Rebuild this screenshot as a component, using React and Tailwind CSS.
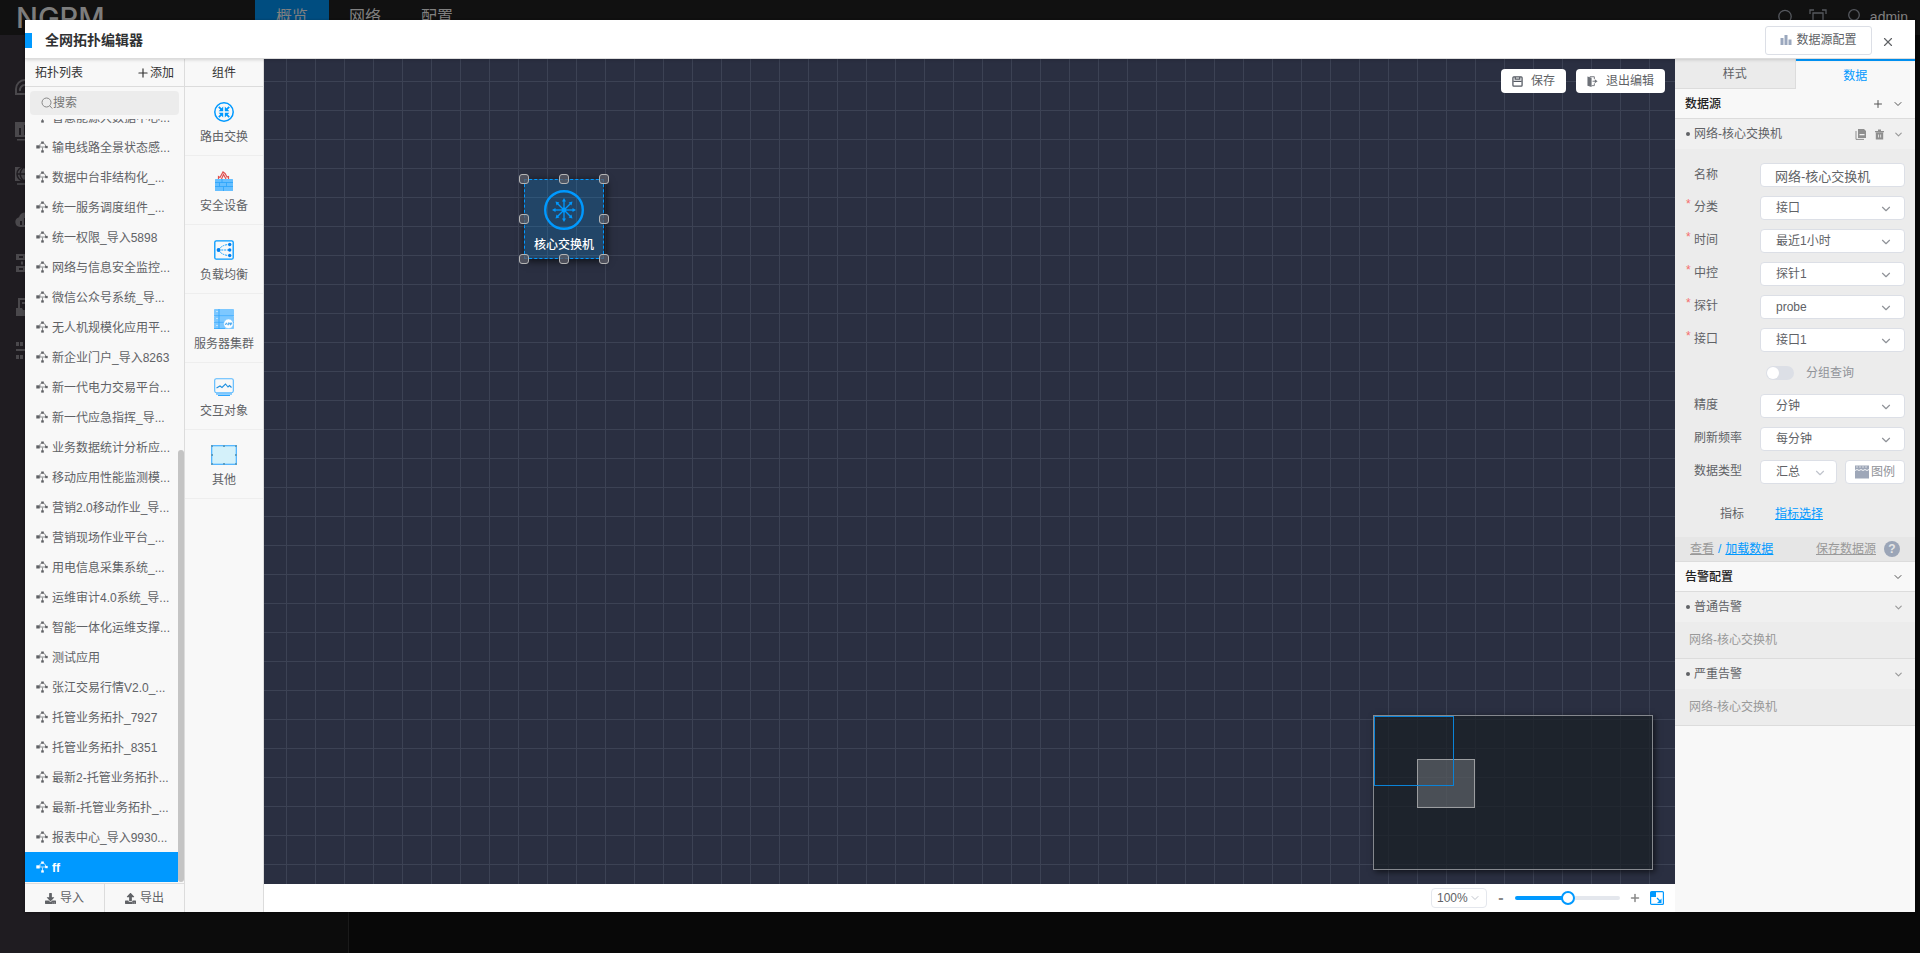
import React from "react";
import { FaDownload, FaUpload } from "react-icons/fa";
import { ChevronDown, Plus, X } from "lucide-react";

const topologies = [
  "智慧能源大数据中心...",
  "输电线路全景状态感...",
  "数据中台非结构化_...",
  "统一服务调度组件_...",
  "统一权限_导入5898",
  "网络与信息安全监控...",
  "微信公众号系统_导...",
  "无人机规模化应用平...",
  "新企业门户_导入8263",
  "新一代电力交易平台...",
  "新一代应急指挥_导...",
  "业务数据统计分析应...",
  "移动应用性能监测模...",
  "营销2.0移动作业_导...",
  "营销现场作业平台_...",
  "用电信息采集系统_...",
  "运维审计4.0系统_导...",
  "智能一体化运维支撑...",
  "测试应用",
  "张江交易行情V2.0_...",
  "托管业务拓扑_7927",
  "托管业务拓扑_8351",
  "最新2-托管业务拓扑...",
  "最新-托管业务拓扑_...",
  "报表中心_导入9930...",
  "ff",
];

function TopologyIcon() {
  return (
    <svg className="size-3 shrink-0" viewBox="0 0 12 12" fill="currentColor" stroke="currentColor">
      <path d="M2 6h8M4 5.500V3.500L5.500 2h2L9.500 4v1.500M6.500 6.500v4" fill="none" strokeWidth="0.700" />
      <rect x="0.300" y="4.300" width="3.400" height="3.200" stroke="none" />
      <rect x="5.200" y="0.500" width="2.600" height="2.200" stroke="none" />
      <rect x="9.200" y="4.900" width="2.500" height="2.300" stroke="none" />
      <rect x="5.200" y="9.300" width="2.600" height="2.300" stroke="none" />
    </svg>
  );
}

function RouterIcon() {
  return (
    <svg className="size-5" viewBox="0 0 20 20" fill="none" stroke="#0099ff">
      <circle cx="10" cy="10" r="9.200" strokeWidth="1.500" />
      {[0, 90, 180, 270].map((angle) => (
        <g key={angle} transform={`rotate(${angle} 10 10)`}>
          <path d="M4.800 4.800l2.500 2.500" strokeWidth="1.800" />
          <path d="M9.200 4.600V9.200H4.600z" fill="#0099ff" stroke="none" />
        </g>
      ))}
    </svg>
  );
}

function FirewallIcon() {
  return (
    <svg className="size-5" viewBox="0 0 20 20">
      <path d="M4.500 8V5.500L6 6.500 9 1l2 1.500L13 6l1.500-.500V8M7.500 8l2-4.500L12 8" fill="none" stroke="#e0504f" strokeWidth="1.200" />
      <rect x="1" y="8" width="18" height="12" rx="0.500" fill="#66bfff" />
      <path d="M1 11.500h18M1 15.500h18M8 8v3.500M12.500 11.500v4M5.500 11.500v4M9.500 15.500V20" stroke="#2aa3fb" strokeWidth="0.800" />
    </svg>
  );
}

function BalanceIcon() {
  return (
    <svg className="size-5" viewBox="0 0 20 20" fill="none" stroke="#0099ff">
      <rect x="0.800" y="0.800" width="18.400" height="18.400" rx="1.500" strokeWidth="1.300" />
      <path d="M4.500 10h11M4.500 10Q8 4.500 15.500 4.500M4.500 10Q8 15.500 15.500 15.500" strokeWidth="0.900" strokeDasharray="2 0.800" />
      <g fill="#0080f0" stroke="none">
        <circle cx="4.500" cy="10" r="1.900" />
        <circle cx="15.700" cy="4.500" r="1.700" />
        <circle cx="15.700" cy="10" r="1.700" />
        <circle cx="15.700" cy="15.500" r="1.700" />
      </g>
    </svg>
  );
}

function ServerIcon() {
  return (
    <svg className="size-5" viewBox="0 0 20 20">
      <g fill="#7dc8ff">
        <rect y="0" width="20" height="6.400" rx="0.800" />
        <rect y="7" width="20" height="6" rx="0.800" />
        <rect y="13.600" width="20" height="6.400" rx="0.800" />
      </g>
      <path d="M0 6.600h20M0 13.400h20M0 19.600h11M5 0v20" stroke="#2ca5ff" strokeWidth="0.800" fill="none" />
      <path d="M2.500 2.500h1M2.500 9.500h1M2.500 16.500h1" stroke="#fff" />
      <circle cx="14.500" cy="14.800" r="4.800" fill="#fff" stroke="#7dc8ff" strokeWidth="0.600" />
      <path d="M11.300 16l1-2.200 1 2.200M14.200 16.400v-2.500h1.200v1.300h-1.200M16.500 16.400v-2.500h1.200v1.300h-1.200" stroke="#1d90e8" strokeWidth="0.700" fill="none" />
    </svg>
  );
}

function InteractIcon() {
  return (
    <svg className="h-[18px] w-5" viewBox="0 1 20 18" fill="none" stroke="#2ca5ff">
      <rect x="0.700" y="1.700" width="18.600" height="14" rx="1.600" strokeWidth="1.100" stroke="#55b8ff" />
      <path d="M2.500 11l3.500-2 2 1.500L11.500 7l2.500 3 1.500-1.500 2 2" strokeWidth="1.100" stroke="#1d8fe0" />
      <path d="M2 17h16M4 18.500h12" strokeWidth="1.200" />
    </svg>
  );
}

function OtherIcon() {
  return (
    <svg className="h-5 w-[26px]" viewBox="0 0 26 20">
      <rect x="0.700" y="0.700" width="24.600" height="18.600" fill="#d4f1fa" stroke="#45b0ff" strokeWidth="1.200" />
      <path d="M0 0h2v2H0zM24 0h2v2h-2zM0 18h2v2H0zM24 18h2v2h-2zM12 0h2v2h-2zM12 18h2v2h-2zM0 9h2v2H0zM24 9h2v2h-2z" fill="#5b9fc4" />
    </svg>
  );
}

const components = [
  { name: "路由交换", Icon: RouterIcon },
  { name: "安全设备", Icon: FirewallIcon },
  { name: "负载均衡", Icon: BalanceIcon },
  { name: "服务器集群", Icon: ServerIcon },
  { name: "交互对象", Icon: InteractIcon },
  { name: "其他", Icon: OtherIcon },
];

function BackgroundPage() {
  return (
    <div className="flex h-full flex-col" aria-hidden="true">
      <header className="flex h-[35px] shrink-0 bg-[#111111] text-base text-[#808080]">
        <div className="w-[255px] overflow-hidden pl-4 font-[Inter] text-[29px] leading-[35px] font-medium text-[#7d7d7d]">NGPM</div>
        <nav className="flex leading-[34px]">
          <a href="#overview" className="w-[74px] bg-[#004d80] text-center">概览</a>
          <a href="#network" className="w-[72px] text-center">网络</a>
          <a href="#config" className="w-[72px] text-center">配置</a>
        </nav>
        <div className="ml-auto flex gap-3 pr-3 text-sm leading-[34px]">
          <svg className="mt-2 size-5" viewBox="0 0 20 20" fill="none" stroke="#55585e" strokeWidth="1.300">
            <circle cx="9" cy="8.500" r="6.200" />
            <path d="M13.500 13.500l4 4" />
          </svg>
          <svg className="mt-2 size-5" viewBox="0 0 20 20" fill="none" stroke="#55585e" strokeWidth="1.300">
            <path d="M2 6V2h4M14 2h4v4M18 14v4h-4M6 18H2v-4M5 5h10v10H5z" />
          </svg>
          <div className="flex gap-1.5 pl-1">
            <svg className="mt-2 size-5" viewBox="0 0 20 20" fill="none" stroke="#55585e" strokeWidth="1.300">
              <circle cx="10" cy="7" r="5.300" />
              <path d="M2 19c0-4 4-6.500 8-6.500s8 2.500 8 6.500" />
            </svg>
            <span>admin</span>
          </div>
        </div>
      </header>
      <div className="flex min-h-0 flex-1">
        <aside className="flex w-[50px] flex-col gap-6 bg-[#1f1c21] pt-[42px] pl-[15px] text-[#4a484c]">
          <svg className="size-5" viewBox="0 0 20 20" fill="none" stroke="currentColor" strokeWidth="2">
            <path d="M1 17v-5a9 9 0 0 1 18 0v5zM5 14a5 5 0 0 1 5-6" />
          </svg>
          <svg className="size-5" viewBox="0 0 20 20" fill="currentColor">
            <path d="M0 1h20v15H0zM4 7v7h2V7zM9 4v10h2V4zM14 9v5h2V9zM2 18h16v1.500H2z" fillRule="evenodd" />
          </svg>
          <svg className="size-5" viewBox="0 0 20 20" fill="none" stroke="currentColor" strokeWidth="1.500">
            <path d="M0 2h20v14H0z" fill="currentColor" stroke="none" />
            <circle cx="9" cy="9" r="7" stroke="#1f1c21" />
            <path d="M2 9h14M9 2c-5 4-5 10 0 14M9 2c5 4 5 10 0 14" stroke="#1f1c21" />
            <path d="M2 19h16" />
          </svg>
          <svg className="size-5" viewBox="0 0 20 20" fill="currentColor">
            <path d="M5 18a5 5 0 0 1-1-9.800A6.500 6.500 0 0 1 16.500 8 5 5 0 0 1 15 18zM5 12v4h2v-4zM9 9v7h2V9z" fillRule="evenodd" />
          </svg>
          <svg className="size-5" viewBox="0 0 20 20" fill="currentColor">
            <path d="M1 1h18v6H1zM1 13h18v6H1zM6 8.500h2v3H6zM4 3v2h4V3zM4 15v2h4v-2z" fillRule="evenodd" />
          </svg>
          <svg className="size-5" viewBox="0 0 20 20" fill="currentColor">
            <path d="M3 1h14v10h2v8H1v-8h2zM5 3v8h2l1 2h4l1-2h2V3zM7 5h6v2H7z" fillRule="evenodd" />
          </svg>
          <svg className="size-5" viewBox="0 0 20 20" fill="currentColor">
            <path d="M1 1h3v4H1zM5 1h3v4H5zM1 8h18v2H1zM1 14h3v4H1zM5 14h3v4H5z" />
          </svg>
        </aside>
        <div className="w-[299px] border-r border-[#1a1a1a] bg-[#0c0c0c]" />
        <div className="flex-1 bg-[#080808]" />
      </div>
    </div>
  );
}

function TopologySidebar() {
  return (
    <aside className="flex w-40 shrink-0 flex-col border-r border-[#dcdcdc] bg-[#f8f8f8]">
      <div className="flex h-7 shrink-0 items-center justify-between border-b border-[#dcdcdc] pr-2.5 pl-2.5 text-[#333]">
        <h2>拓扑列表</h2>
        <button className="flex items-center">
          <Plus className="size-3.5" strokeWidth={2} />
          添加
        </button>
      </div>
      <div className="px-[5px] py-1">
        <label className="flex h-6 items-center rounded bg-[#ececec] pl-[11px] text-[#888]">
          <svg className="size-3 shrink-0" viewBox="0 0 12 12" fill="none" stroke="currentColor">
            <circle cx="5.500" cy="5.500" r="4.500" />
            <path d="M8.700 8.700l2.500 2.800" />
          </svg>
          <input type="text" aria-label="搜索" placeholder="搜索" className="w-full min-w-0 bg-transparent outline-none placeholder:text-[#757575]" />
        </label>
      </div>
      <div className="relative mb-px flex min-h-0 flex-1 flex-col justify-end overflow-hidden pr-1.5">
        <ul>
          {topologies.map((name) => (
            <li key={name}>
              <button
                className={
                  name === "ff"
                    ? "flex h-[30px] w-full items-center gap-1 bg-[#0099ff] pl-[11px] font-bold whitespace-nowrap text-white"
                    : "flex h-[30px] w-full items-center gap-1 pl-[11px] whitespace-nowrap text-[#606266]"
                }
              >
                <TopologyIcon />
                <span className="pt-0.5">{name}</span>
              </button>
            </li>
          ))}
        </ul>
        <div className="absolute right-0 bottom-0 h-[432px] w-1.5 rounded-full bg-[#c4c4c4]" />
      </div>
      <div className="flex h-[29px] shrink-0 border-t border-[#dcdcdc] text-[#606266]">
        <button className="flex flex-1 items-center justify-center gap-1 border-r border-[#dcdcdc]">
          <FaDownload className="size-[11px]" />
          导入
        </button>
        <button className="flex flex-1 items-center justify-center gap-1">
          <FaUpload className="size-[11px]" />
          导出
        </button>
      </div>
    </aside>
  );
}

function ComponentPalette() {
  return (
    <aside className="w-[79px] shrink-0 border-r border-[#dcdcdc] bg-[#f8f8f8]">
      <h2 className="flex h-7 items-center justify-center border-b border-[#dcdcdc] text-[#333]">组件</h2>
      <ul>
        {components.map(({ name, Icon }) => (
          <li key={name} className="flex flex-col items-center gap-1.5 border-b border-[#eeeeee] pt-[15px] pb-[9px] text-[#606266]">
            <Icon />
            <span className="leading-[18px]">{name}</span>
          </li>
        ))}
      </ul>
    </aside>
  );
}

const handles = [
  "-top-[6px] -left-[6px]",
  "-top-[6px] left-[34px]",
  "-top-[6px] left-[74px]",
  "top-[34px] -left-[6px]",
  "top-[34px] left-[74px]",
  "top-[74px] -left-[6px]",
  "top-[74px] left-[34px]",
  "top-[74px] left-[74px]",
];

function CanvasNode() {
  return (
    <div className="absolute top-[120px] left-[260px] flex size-20 flex-col items-center border border-dashed border-[#0099ff] bg-[#0099ff]/20 pt-2.5 shadow-[2px_2px_8px_rgba(0,0,0,0.7)]">
      <svg className="size-10" viewBox="0 0 40 40" fill="none" stroke="#0099ff">
        <circle cx="20" cy="20" r="18.800" strokeWidth="2.400" />
        {[0, 45, 90, 135, 180, 225, 270, 315].map((angle) => (
          <g key={angle} transform={`rotate(${angle} 20 20)`}>
            <path d="M20 20V10" strokeWidth="1.300" />
            <path d="M18 11.500L20 8l2 3.500z" fill="#0099ff" stroke="none" />
          </g>
        ))}
        <circle cx="20" cy="20" r="2.400" fill="#0099ff" stroke="none" />
      </svg>
      <span className="mt-1.5 leading-[18px] font-medium text-white">核心交换机</span>
      {handles.map((place) => (
        <span key={place} className={`absolute size-2.5 rounded-[3px] border border-[#b5b5b5] bg-[#5a5b66]/80 ${place}`} />
      ))}
    </div>
  );
}

function Minimap() {
  return (
    <div className="absolute right-[22px] bottom-3.5 h-[155px] w-[280px] border border-[#85888e] bg-[#1a2026]/75 shadow-[2px_2px_6px_rgba(0,0,0,0.6)]">
      <div className="absolute top-[43px] left-[43px] h-[49px] w-[58px] border border-[#9b9da0] bg-white/20" />
      <div className="absolute top-0 left-0 h-[70px] w-20 border border-[#0a83d8]" />
    </div>
  );
}

function Canvas() {
  return (
    <main className="flex min-w-0 flex-1 flex-col">
      <div className="relative min-h-0 flex-1 overflow-hidden bg-[#2a2f41] bg-[linear-gradient(to_right,#3c4254_1px,transparent_1px),linear-gradient(to_bottom,#3c4254_1px,transparent_1px)] bg-size-[29px_29px] bg-position-[22px_22px]">
        <div className="flex justify-end gap-2.5 pt-2.5 pr-2.5 text-[#606266]">
          <button className="flex h-6 items-center gap-2 rounded-sm bg-white px-[11px]">
            <svg className="size-[11px]" viewBox="0 0 12 12" fill="none" stroke="#555a63" strokeWidth="1.400">
              <rect x="1" y="1" width="10" height="10" rx="1" />
              <path d="M1.500 5.800h9M3.500 1v2.500h5V1" />
            </svg>
            保存
          </button>
          <button className="flex h-6 items-center gap-2 rounded-sm bg-white px-[11px]">
            <svg className="size-[11px]" viewBox="0 0 12 12" fill="#6d7178">
              <path d="M0.500 0.500L5 1.800V12L0.500 10.500z" />
              <path d="M3 0.800h5v2.500M8 8v2.500H5M6 5.700h3" fill="none" stroke="#6d7178" />
              <path d="M8.500 3.500l3 2.200-3 2.200z" />
            </svg>
            退出编辑
          </button>
        </div>
        <CanvasNode />
        <Minimap />
      </div>
      <footer className="flex h-7 shrink-0 items-center justify-end bg-white pr-[11px] text-[#606266]">
        <div className="relative">
          <select aria-label="缩放比例" className="h-5 w-14 appearance-none rounded-sm border border-[#e4e7ed] bg-white pl-[5px]">
            <option>100%</option>
          </select>
          <ChevronDown className="pointer-events-none absolute top-1 right-1.5 size-3 text-[#c0c4cc]" strokeWidth={2} />
        </div>
        <button aria-label="缩小" className="w-7 text-center text-base leading-5 font-bold text-[#888]">-</button>
        <input
          type="range"
          aria-label="缩放"
          defaultValue="50"
          className="h-1 w-[105px] appearance-none rounded-full bg-[linear-gradient(to_right,#0099ff_50%,#e4e7ed_50%)] [&::-webkit-slider-thumb]:size-3.5 [&::-webkit-slider-thumb]:appearance-none [&::-webkit-slider-thumb]:rounded-full [&::-webkit-slider-thumb]:border-2 [&::-webkit-slider-thumb]:border-[#0099ff] [&::-webkit-slider-thumb]:bg-white"
        />
        <button aria-label="放大" className="flex w-[30px] justify-center text-[#888]">
          <Plus className="size-3" strokeWidth={3} />
        </button>
        <button aria-label="适应画布">
          <svg className="size-3.5" viewBox="0 0 14 14">
            <rect x="0.600" y="0.600" width="12.800" height="12.800" rx="1" fill="#fff" stroke="#0099ff" strokeWidth="1.200" />
            <path d="M1 1h5v5H1zM11.500 7.500v4.500H7z" fill="#0099ff" />
            <path d="M7 7l3 3" stroke="#0099ff" strokeWidth="1.300" />
          </svg>
        </button>
      </footer>
    </main>
  );
}

function SelectRow({ id, label, value, required }) {
  return (
    <div className="flex h-6 items-center">
      <span className="w-2 shrink-0 self-start text-[#f56c6c]">{required ? "*" : ""}</span>
      <label htmlFor={id} className="w-[66px] shrink-0 pb-0.5">{label}</label>
      <div className="relative flex-1">
        <select id={id} className="block h-6 w-full appearance-none rounded-sm border border-[#dcdfe6] bg-white pl-[15px]">
          <option>{value}</option>
        </select>
        <ChevronDown className="pointer-events-none absolute top-1.5 right-3 size-3.5 text-[#909399]" strokeWidth={2} />
      </div>
    </div>
  );
}

function SectionHeader({ title, children }) {
  return (
    <div className="flex h-[30px] items-center justify-between border-b border-[#dcdcdc] bg-[#f8f8f8] pr-[11px] pl-2.5 text-[#222]">
      <h3 className="font-medium">{title}</h3>
      <div className="flex items-center gap-2 text-[#555]">
        {children}
        <ChevronDown className="size-3" strokeWidth={2} />
      </div>
    </div>
  );
}

function ItemHeader({ title, children }) {
  return (
    <div className="flex h-[30px] items-center bg-[#f0f0f0] pr-[11px] pl-[11px] text-[#606266]">
      <span className="mr-1 size-1 rounded-full bg-[#606266]" />
      <h4>{title}</h4>
      <div className="ml-auto flex items-center gap-2 text-[#999]">
        {children}
        <ChevronDown className="size-[11px]" strokeWidth={2.5} />
      </div>
    </div>
  );
}

function DataPanel() {
  return (
    <aside className="w-60 shrink-0 bg-[#f8f8f8] text-[#606266]">
      <div className="flex h-[30px]" role="tablist">
        <button role="tab" aria-selected="false" className="flex-1 border-r border-b border-[#dcdcdc] bg-[#ebebeb]">样式</button>
        <button role="tab" aria-selected="true" className="flex-1 border-t-2 border-[#0099ff] pt-0.5 text-[#0099ff]">数据</button>
      </div>
      <SectionHeader title="数据源">
        <button aria-label="添加数据源">
          <Plus className="size-3" strokeWidth={2} />
        </button>
      </SectionHeader>
      <ItemHeader title="网络-核心交换机">
        <button aria-label="复制">
          <svg className="size-[11px]" viewBox="0 0 11 11" fill="#8f8f8f">
            <path d="M3 0h6l2 2v7H3zM4.500 5h5v1.200h-5z" fillRule="evenodd" />
            <path d="M1 2v8.400h8" fill="none" stroke="#8f8f8f" />
          </svg>
        </button>
        <button aria-label="删除">
          <svg className="size-[11px]" viewBox="0 0 11 11" fill="#8f8f8f">
            <path d="M1 2h9v1.200H1zM4 0.500h3V2H4zM1.800 3.600h7.400V10.500H1.800zM4 5.500v3h0.800v-3zM6.300 5.500v3h0.800v-3z" fillRule="evenodd" />
          </svg>
        </button>
      </ItemHeader>
      <form className="flex flex-col gap-[9px] bg-[#ececec] pt-3.5 pr-2.5 pb-3.5 pl-[11px]">
        <div className="flex h-6 items-center">
          <label htmlFor="name" className="w-[74px] shrink-0 pl-2">名称</label>
          <input id="name" type="text" defaultValue="网络-核心交换机" className="h-6 min-w-0 flex-1 rounded-sm border border-[#dcdfe6] bg-white pl-3.5 text-[13px]" />
        </div>
        <SelectRow id="category" label="分类" value="接口" required />
        <SelectRow id="time" label="时间" value="最近1小时" required />
        <SelectRow id="control" label="中控" value="探针1" required />
        <SelectRow id="probe" label="探针" value="probe" required />
        <SelectRow id="port" label="接口" value="接口1" required />
        <label className="flex h-6 items-center gap-3 pl-20 text-[#909399]">
          <input type="checkbox" role="switch" className="flex h-3.5 w-7 appearance-none items-center rounded-full bg-[#dcdfe6] pl-px before:size-3 before:rounded-full before:bg-white" />
          分组查询
        </label>
        <SelectRow id="precision" label="精度" value="分钟" />
        <SelectRow id="refresh" label="刷新频率" value="每分钟" />
        <div className="flex h-6 items-center">
          <label htmlFor="kind" className="w-[74px] shrink-0 pb-0.5 pl-2">数据类型</label>
          <div className="relative flex-1">
            <select id="kind" className="block h-6 w-full appearance-none rounded-sm border border-[#dcdfe6] bg-white pl-[15px]">
              <option>汇总</option>
            </select>
            <ChevronDown className="pointer-events-none absolute top-1.5 right-2.5 size-3.5 text-[#c0c4cc]" strokeWidth={2} />
          </div>
          <button type="button" className="ml-2 flex h-6 w-[60px] items-center justify-center gap-0.5 rounded-sm border border-[#dcdfe6] bg-white text-[#909399]">
            <svg className="size-3.5" viewBox="0 0 14 14">
              <rect width="14" height="13" y="0.500" fill="#9ea7b8" />
              <path d="M1 2h12" stroke="#fff" strokeWidth="0.600" strokeDasharray="2 1" />
              <path d="M0 5.500L2 4.500l2 1 2-1 2 1 2-1 2 1 2-1" fill="none" stroke="#fff" strokeWidth="0.900" />
            </svg>
            图例
          </button>
        </div>
        <div className="flex items-center pt-3 pl-[34px] leading-[18px]">
          <span className="w-[55px]">指标</span>
          <a href="#metrics" className="text-[#0099ff] underline">指标选择</a>
        </div>
      </form>
      <div className="flex h-[25px] items-center border-b border-[#dcdcdc] bg-[#e6e6e6] pr-[15px] pl-[15px] text-[#999]">
        <a href="#view" className="underline">查看</a>
        <span className="px-1 text-[#0099ff]">/</span>
        <a href="#load" className="text-[#0099ff] underline">加载数据</a>
        <a href="#save" className="mr-2 ml-auto underline">保存数据源</a>
        <button aria-label="帮助" className="size-4 rounded-full bg-[#9ba5b7] text-xs leading-4 font-bold text-[#e6e6e6]">?</button>
      </div>
      <SectionHeader title="告警配置" />
      <ItemHeader title="普通告警" />
      <p className="flex h-[37px] items-center border-b border-[#dcdcdc] bg-[#ececec] pl-3.5 text-[#999]">网络-核心交换机</p>
      <ItemHeader title="严重告警" />
      <p className="flex h-[37px] items-center border-b border-[#dcdcdc] bg-[#ececec] pl-3.5 text-[#999]">网络-核心交换机</p>
    </aside>
  );
}

export default function App() {
  return (
    <div className="relative h-screen overflow-hidden bg-[#080808] font-['Liberation_Sans','Noto_Sans_CJK_SC',sans-serif] text-xs">
      <BackgroundPage />
      <section role="dialog" aria-label="全网拓扑编辑器" className="absolute top-5 right-[5px] bottom-[41px] left-[25px] flex flex-col bg-white shadow-[0_1px_3px_rgba(0,0,0,0.3)]">
        <header className="relative z-10 flex h-[39px] shrink-0 items-center border-b border-[#dcdcdc] bg-white pt-0.5 shadow-[0_1px_3px_rgba(0,0,0,0.15)]">
          <span className="h-[15px] w-[7px] bg-[#0099ff]" />
          <h1 className="ml-[13px] text-sm font-bold text-[#303133]">全网拓扑编辑器</h1>
          <button className="ml-auto flex h-[29px] w-[107px] items-center justify-center gap-1 rounded-[3px] border border-[#dcdfe6] text-[#606266]">
            <svg className="size-3" viewBox="0 0 12 12" fill="#9aa7bd">
              <path d="M0.500 4h3v7h-3zM4.500 1h3v10h-3zM8.500 5.500h3V11h-3z" />
            </svg>
            数据源配置
          </button>
          <button aria-label="关闭" className="mr-5 ml-[9px] pt-1 text-[#606266]">
            <X className="size-3.5" strokeWidth={2} />
          </button>
        </header>
        <div className="flex min-h-0 flex-1">
          <TopologySidebar />
          <ComponentPalette />
          <Canvas />
          <DataPanel />
        </div>
      </section>
    </div>
  );
}
